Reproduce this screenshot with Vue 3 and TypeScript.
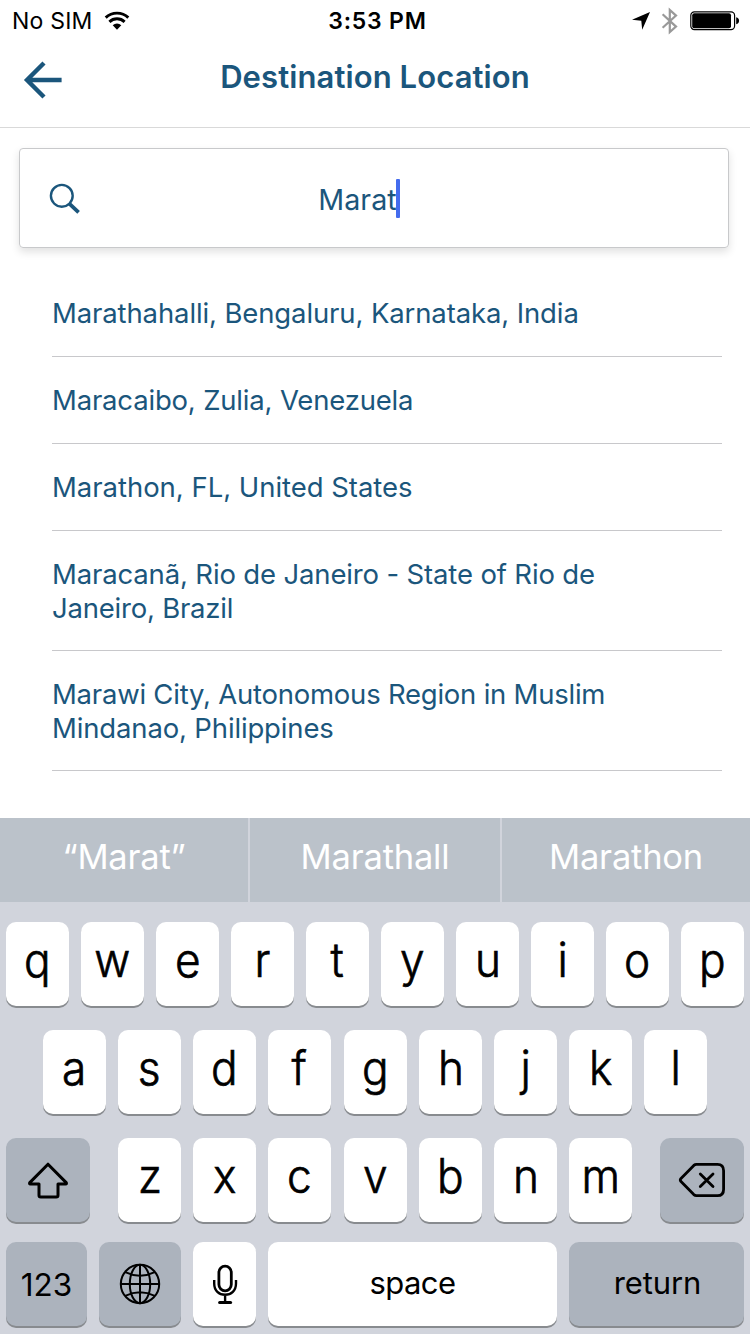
<script setup lang="ts">
interface Line {
  text: string
  tracking: number
}

interface Place {
  lines: Line[]
}

const query = 'Marat'

const places: Place[] = [
  { lines: [{ text: 'Marathahalli, Bengaluru, Karnataka, India', tracking: -0.12 }] },
  { lines: [{ text: 'Maracaibo, Zulia, Venezuela', tracking: -0.18 }] },
  { lines: [{ text: 'Marathon, FL, United States', tracking: -0.03 }] },
  {
    lines: [
      { text: 'Maracanã, Rio de Janeiro - State of Rio de', tracking: -0.15 },
      { text: 'Janeiro, Brazil', tracking: -0.22 },
    ],
  },
  {
    lines: [
      { text: 'Marawi City, Autonomous Region in Muslim', tracking: -0.23 },
      { text: 'Mindanao, Philippines', tracking: -0.15 },
    ],
  },
]

const suggestions: string[] = ['“Marat”', 'Marathall', 'Marathon']

const topRow: string[] = [...'qwertyuiop']
const homeRow: string[] = [...'asdfghjkl']
const bottomRow: string[] = [...'zxcvbnm']
</script>

<template>
  <main class="screen">
    <div class="status">
      <div class="status-left">
        <span class="carrier">No SIM</span>
        <svg class="wifi" width="26" height="20" viewBox="0 0 26 20">
          <path d="M1.7 6.6A16.4 16.4 0 0 1 24.3 6.6" fill="none" stroke="#000" stroke-width="2.9" />
          <path d="M5.4 10.9A10.9 10.9 0 0 1 20.6 10.9" fill="none" stroke="#000" stroke-width="2.9" />
          <path d="M8.7 14.2A6.2 6.2 0 0 1 17.3 14.2L13 18.8Z" fill="#000" />
        </svg>
      </div>
      <span class="clock">3:53 PM</span>
      <div class="status-right">
        <svg width="20" height="20" viewBox="0 0 20 20">
          <path d="M19 1L11.2 18.8L10.3 9.8L1 8.7Z" fill="#000" />
        </svg>
        <svg class="bluetooth" width="18" height="28" viewBox="0 0 18 28">
          <path d="M1.6 7.2L15 19.6L8.8 25V3L15 8.6L1.6 20.8" fill="none" stroke="#999" stroke-width="2.2" />
        </svg>
        <svg class="battery" width="50" height="20" viewBox="0 0 50 20">
          <rect x="0.8" y="0.8" width="43.8" height="17.8" rx="3.6" fill="none" stroke="#000" stroke-width="1.2" />
          <rect x="2.2" y="2.2" width="38.8" height="15" rx="2" fill="#000" />
          <path d="M46.2 6.2C50 6.6 50 12.8 46.2 13.2Z" fill="#000" />
        </svg>
      </div>
    </div>

    <header class="header">
      <svg class="back" width="40" height="40" viewBox="0 0 40 40">
        <path d="M22 3L5 20L22 37M5 20H39.6" fill="none" stroke="#1b567c" stroke-width="4.4" />
      </svg>
      <h1>Destination Location</h1>
    </header>

    <div class="search">
      <svg class="lens" width="32" height="32" viewBox="0 0 32 32">
        <circle cx="12.8" cy="12.8" r="10.9" fill="none" stroke="#1b567c" stroke-width="2.4" />
        <path d="M20 20.4L29.6 29.4" stroke="#1b567c" stroke-width="3.8" />
      </svg>
      <div class="query"><span>{{ query }}</span><i class="caret"></i></div>
    </div>

    <ul class="places">
      <li v-for="place in places" :key="place.lines[0].text" :class="{ tall: place.lines.length > 1 }">
        <span v-for="line in place.lines" :key="line.text" :style="{ letterSpacing: line.tracking + 'px' }">{{ line.text }}</span>
      </li>
    </ul>

    <section class="keyboard">
      <div class="suggestions">
        <span v-for="word in suggestions" :key="word">{{ word }}</span>
      </div>

      <div class="rows">
        <div class="row">
          <span v-for="k in topRow" :key="k" class="key"><b>{{ k }}</b></span>
        </div>
        <div class="row home">
          <span v-for="k in homeRow" :key="k" class="key" :class="{ nudge: k === 'g' }"><b>{{ k }}</b></span>
        </div>
        <div class="row">
          <span class="key dark shift">
            <svg width="42" height="38" viewBox="0 0 42 38">
              <path
                d="M21 3.2L39.2 21.6Q40 23 38.6 23H31V34.2Q31 36 29.2 36H13.8Q12 36 12 34.2V23H3.4Q2 23 2.8 21.6Z"
                fill="none" stroke="#000" stroke-width="3" stroke-linejoin="round" />
            </svg>
          </span>
          <span v-for="k in bottomRow" :key="k" class="key" :class="{ nudge: k === 'v' }"><b>{{ k }}</b></span>
          <span class="key dark delete">
            <svg width="48" height="36" viewBox="0 0 48 36">
              <path
                d="M18.4 2.3H39.5Q45.6 2.3 45.6 8.8V27.2Q45.6 33.7 39.5 33.7H18.4Q17 33.7 15.8 32.6L3 19.6Q1.6 18 3 16.4L15.8 3.4Q17 2.3 18.4 2.3Z"
                fill="none" stroke="#000" stroke-width="2.8" stroke-linejoin="round" />
              <path d="M22.3 12L35 24.4M35 12L22.3 24.4" stroke="#000" stroke-width="2.8" stroke-linecap="round" />
            </svg>
          </span>
        </div>
        <div class="row">
          <span class="key dark digits">123</span>
          <span class="key dark globe">
            <svg width="42" height="42" viewBox="0 0 42 42" fill="none" stroke="#000" stroke-width="2">
              <circle cx="21" cy="21" r="19.2" />
              <ellipse cx="21" cy="21" rx="10.2" ry="19.2" />
              <path d="M21 1.8V40.2M1.8 21H40.2M6.2 9.2Q21 16.4 35.8 9.2M6.2 32.8Q21 25.6 35.8 32.8" />
            </svg>
          </span>
          <span class="key mic">
            <svg width="26" height="42" viewBox="0 0 26 42" fill="none" stroke="#000" stroke-width="2.8">
              <rect x="6.9" y="3.2" width="12.4" height="24.6" rx="6.2" />
              <path d="M2.2 17V20.6C2.2 27.8 7 31.8 13.1 31.8S24 27.8 24 20.6V17M13.1 32V39" stroke-width="2.4" />
              <path d="M7.6 39.4H18.6" stroke-width="3" stroke-linecap="round" />
            </svg>
          </span>
          <span class="key word space">space</span>
          <span class="key dark word return">return</span>
        </div>
      </div>
    </section>
  </main>
</template>

<style>
body {
  margin: 0;
  background: #fff;
}
</style>

<style scoped>
.screen {
  display: flex;
  flex-direction: column;
  width: 750px;
  height: 1334px;
  overflow: hidden;
  background: #fff;
  color: #1b567c;
  font-family: Inter, "Liberation Sans", sans-serif;
  white-space: nowrap;
}

.status {
  display: grid;
  grid-template-columns: 1fr auto 1fr;
  align-items: center;
  height: 40px;
  color: #000;
}

.status-left {
  display: flex;
  align-items: center;
  padding-left: 12px;
}

.carrier {
  font-size: 23px;
  line-height: 40px;
  letter-spacing: 0.2px;
  padding-top: 1px;
}

.wifi {
  margin-left: 11px;
}

.clock {
  font-size: 23px;
  font-weight: 600;
  line-height: 40px;
  letter-spacing: 0.8px;
  padding: 1px 0 0 5px;
}

.status-right {
  display: flex;
  align-items: center;
  justify-content: flex-end;
  padding-right: 10px;
}

.bluetooth {
  margin-left: 10px;
}

.battery {
  margin-left: 11px;
}

.header {
  display: grid;
  grid-template-columns: 100px 1fr 100px;
  height: 87px;
  border-bottom: 1px solid #d9d9d9;
}

.back {
  margin: 20px 0 0 22px;
}

h1 {
  margin: 0;
  text-align: center;
  font-size: 31px;
  font-weight: 600;
  line-height: 74px;
  letter-spacing: 0.1px;
}

.search {
  display: grid;
  grid-template-columns: 90px 1fr 122px;
  align-items: center;
  box-sizing: border-box;
  height: 100px;
  margin: 20px 21px 0 19px;
  border: 1px solid #c8c9cb;
  border-radius: 4px;
  box-shadow: 0 4px 8px rgba(0, 0, 0, 0.12);
}

.lens {
  margin: 2px 0 0 29px;
}

.query {
  display: flex;
  align-items: center;
  justify-content: center;
  font-size: 28.7px;
  line-height: 36px;
  padding-left: 1px;
}

.query span {
  padding-top: 3px;
}

.caret {
  width: 4px;
  height: 39px;
  margin: 0 -1px 0 -1px;
  border-radius: 1px;
  background: #446cee;
}

.places {
  margin: 22px 28px 0 52px;
  padding: 0;
  list-style: none;
}

.places li {
  display: flex;
  flex-direction: column;
  justify-content: center;
  box-sizing: border-box;
  height: 87px;
  border-bottom: 1px solid #c8c8cb;
  font-size: 27.5px;
  line-height: 34px;
}

.places .tall {
  height: 120px;
}

.keyboard {
  margin-top: auto;
  height: 516px;
  background: #d1d4dc;
}

.suggestions {
  display: grid;
  grid-template-columns: 248px 250px 248px;
  gap: 2px;
  height: 84px;
}

.suggestions span {
  background: #bbc2ca;
  color: #fff;
  text-align: center;
  font-size: 34.5px;
  line-height: 77px;
  letter-spacing: -0.2px;
}

.rows {
  display: flex;
  flex-direction: column;
  gap: 24px;
  padding: 20px 6px 0;
}

.row {
  display: flex;
  gap: 12px;
  height: 84px;
}

.row:last-child {
  margin-top: -4px;
}

.home {
  padding-left: 37px;
}

.key {
  display: flex;
  align-items: center;
  justify-content: center;
  flex: none;
  box-sizing: border-box;
  width: 63px;
  height: 84px;
  padding-bottom: 9px;
  border-radius: 10px;
  background: #fff;
  box-shadow: 0 2px 0 #888b8f;
  color: #000;
  font-size: 47.5px;
}

.key b {
  font-weight: 300;
  -webkit-text-stroke: 0.7px #000;
  transform: scaleX(0.93);
}

.nudge {
  margin-left: 1px;
}

.dark {
  background: #acb3bd;
}

.shift,
.delete {
  width: 84px;
  padding-bottom: 0;
}

.shift {
  margin-right: 16px;
}

.delete {
  margin-left: 16px;
}

.digits {
  width: 81px;
  padding-bottom: 0;
  font-size: 31.5px;
}

.globe {
  width: 82px;
  padding-bottom: 0;
}

.mic {
  padding-bottom: 0;
}

.word {
  padding-bottom: 3px;
  font-size: 31px;
}

.space {
  width: 289px;
  letter-spacing: -0.6px;
}

.return {
  width: 175px;
  padding-left: 2px;
  letter-spacing: -0.1px;
}
</style>
